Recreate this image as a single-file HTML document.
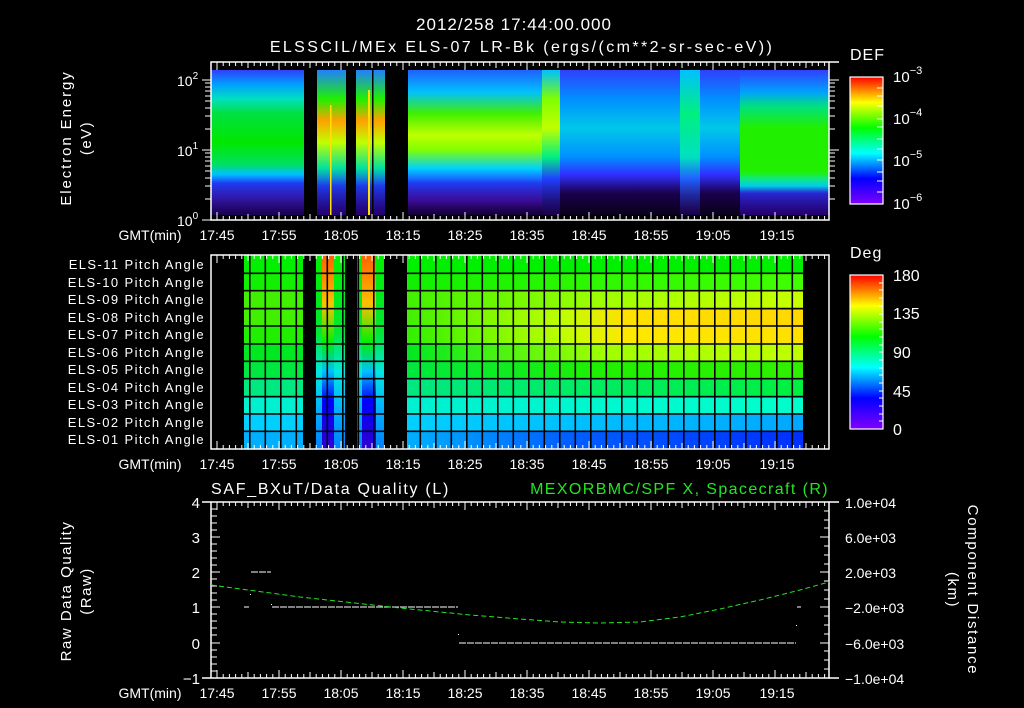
<!DOCTYPE html>
<html><head><meta charset="utf-8"><style>
html,body{margin:0;padding:0;background:#000;}
svg{display:block}
text{font-family:"Liberation Sans",sans-serif;fill:#fff;}
</style></head><body>
<svg width="1024" height="708" viewBox="0 0 1024 708" xmlns="http://www.w3.org/2000/svg">
<defs>
<linearGradient id="gA" x1="0" y1="0" x2="0" y2="1">
<stop offset="0" stop-color="#3040ff"/><stop offset=".1" stop-color="#00a0ff"/><stop offset=".2" stop-color="#00e0c0"/><stop offset=".3" stop-color="#00e040"/><stop offset=".5" stop-color="#00e800"/><stop offset=".65" stop-color="#00e060"/><stop offset=".72" stop-color="#00c0ff"/><stop offset=".78" stop-color="#2040ff"/><stop offset=".88" stop-color="#4020e0"/><stop offset="1" stop-color="#300090"/></linearGradient>
<linearGradient id="gB" x1="0" y1="0" x2="0" y2="1">
<stop offset="0" stop-color="#2080ff"/><stop offset=".2" stop-color="#20f000"/><stop offset=".35" stop-color="#ffa000"/><stop offset=".5" stop-color="#c0ff00"/><stop offset=".68" stop-color="#00e0a0"/><stop offset=".8" stop-color="#2040ff"/><stop offset="1" stop-color="#4000c0"/></linearGradient>
<linearGradient id="gD" x1="0" y1="0" x2="0" y2="1">
<stop offset="0" stop-color="#2060ff"/><stop offset=".15" stop-color="#00c0ff"/><stop offset=".3" stop-color="#40f000"/><stop offset=".45" stop-color="#c0ff00"/><stop offset=".55" stop-color="#80ff00"/><stop offset=".68" stop-color="#00d0ff"/><stop offset=".78" stop-color="#2040ff"/><stop offset=".9" stop-color="#5010d0"/><stop offset="1" stop-color="#200060"/></linearGradient>
<linearGradient id="gE" x1="0" y1="0" x2="0" y2="1">
<stop offset="0" stop-color="#00c0ff"/><stop offset=".2" stop-color="#80ff00"/><stop offset=".4" stop-color="#c0ff00"/><stop offset=".6" stop-color="#00f080"/><stop offset=".75" stop-color="#2040ff"/><stop offset="1" stop-color="#300080"/></linearGradient>
<linearGradient id="gF" x1="0" y1="0" x2="0" y2="1">
<stop offset="0" stop-color="#3040ff"/><stop offset=".2" stop-color="#0090ff"/><stop offset=".4" stop-color="#00c8e8"/><stop offset=".6" stop-color="#0090ff"/><stop offset=".72" stop-color="#3030ff"/><stop offset=".85" stop-color="#200060"/><stop offset="1" stop-color="#100030"/></linearGradient>
<linearGradient id="gG" x1="0" y1="0" x2="0" y2="1">
<stop offset="0" stop-color="#00c0ff"/><stop offset=".3" stop-color="#00f080"/><stop offset=".6" stop-color="#00e0c0"/><stop offset=".75" stop-color="#2060ff"/><stop offset="1" stop-color="#300080"/></linearGradient>
<linearGradient id="gI" x1="0" y1="0" x2="0" y2="1">
<stop offset="0" stop-color="#3040ff"/><stop offset=".15" stop-color="#00a0ff"/><stop offset=".25" stop-color="#00e080"/><stop offset=".4" stop-color="#20f000"/><stop offset=".7" stop-color="#20f000"/><stop offset=".8" stop-color="#00e0ff"/><stop offset=".85" stop-color="#3030ff"/><stop offset="1" stop-color="#4000c0"/></linearGradient>
<linearGradient id="dk" x1="0" y1="0" x2="0" y2="1">
<stop offset="0" stop-color="#000" stop-opacity="0"/><stop offset=".75" stop-color="#000" stop-opacity="0"/><stop offset="1" stop-color="#000" stop-opacity=".45"/></linearGradient>
<linearGradient id="cbDEF" x1="0" y1="1" x2="0" y2="0">
<stop offset="0" stop-color="#8000ff"/><stop offset=".2" stop-color="#0000ff"/><stop offset=".4" stop-color="#00ffff"/><stop offset=".6" stop-color="#00ff00"/><stop offset=".8" stop-color="#ffff00"/><stop offset="1" stop-color="#ff0000"/></linearGradient>
<linearGradient id="sB" x1="0" y1="0" x2="0" y2="1">
<stop offset="0" stop-color="#ff6000"/><stop offset=".25" stop-color="#ffc000"/><stop offset=".45" stop-color="#00f000"/><stop offset=".6" stop-color="#00c0ff"/><stop offset=".75" stop-color="#0000ff"/><stop offset="1" stop-color="#3000d0"/></linearGradient>
<linearGradient id="sG" x1="0" y1="0" x2="0" y2="1">
<stop offset="0" stop-color="#00f000"/><stop offset=".4" stop-color="#00e830"/><stop offset=".6" stop-color="#00e8e0"/><stop offset=".8" stop-color="#00b0ff"/><stop offset="1" stop-color="#0080ff"/></linearGradient>
<linearGradient id="r1" x1="0" x2="1"><stop offset="0" stop-color="#00f000"/><stop offset="1" stop-color="#00f000"/></linearGradient>
<linearGradient id="r2" x1="0" x2="1"><stop offset="0" stop-color="#10f000"/><stop offset=".5" stop-color="#30f800"/><stop offset="1" stop-color="#40ff00"/></linearGradient>
<linearGradient id="r3" x1="0" x2="1"><stop offset="0" stop-color="#40f000"/><stop offset=".5" stop-color="#a0ff00"/><stop offset="1" stop-color="#c8ff00"/></linearGradient>
<linearGradient id="r4" x1="0" x2="1"><stop offset="0" stop-color="#40f000"/><stop offset=".4" stop-color="#c0ff00"/><stop offset=".55" stop-color="#ffe000"/><stop offset="1" stop-color="#ffd800"/></linearGradient>
<linearGradient id="r5" x1="0" x2="1"><stop offset="0" stop-color="#30f000"/><stop offset=".4" stop-color="#c0ff00"/><stop offset=".55" stop-color="#ffe800"/><stop offset="1" stop-color="#ffe000"/></linearGradient>
<linearGradient id="r6" x1="0" x2="1"><stop offset="0" stop-color="#00e820"/><stop offset=".5" stop-color="#a0ff00"/><stop offset="1" stop-color="#c0ff00"/></linearGradient>
<linearGradient id="r7" x1="0" x2="1"><stop offset="0" stop-color="#00e840"/><stop offset=".5" stop-color="#20f000"/><stop offset="1" stop-color="#30f000"/></linearGradient>
<linearGradient id="r8" x1="0" x2="1"><stop offset="0" stop-color="#00e880"/><stop offset="1" stop-color="#00f040"/></linearGradient>
<linearGradient id="r9" x1="0" x2="1"><stop offset="0" stop-color="#00f0d0"/><stop offset="1" stop-color="#00ffcc"/></linearGradient>
<linearGradient id="r10" x1="0" x2="1"><stop offset="0" stop-color="#00d0ff"/><stop offset="1" stop-color="#00a8ff"/></linearGradient>
<linearGradient id="r11" x1="0" x2="1"><stop offset="0" stop-color="#00b0ff"/><stop offset=".4" stop-color="#0060ff"/><stop offset="1" stop-color="#0030ff"/></linearGradient>
<pattern id="vgrid" x="264.5" y="0" width="15.5" height="708" patternUnits="userSpaceOnUse"><rect x="0" y="0" width="1.6" height="708" fill="#000"/></pattern>
<path id="mt" stroke="#fff" stroke-width="1" d="M223.2 0v4M229.4 0v4M235.6 0v4M241.8 0v4M248 0v6M254.2 0v4M260.4 0v4M266.6 0v4M272.8 0v4M285.2 0v4M291.4 0v4M297.6 0v4M303.8 0v4M310 0v6M316.2 0v4M322.4 0v4M328.6 0v4M334.8 0v4M347.2 0v4M353.4 0v4M359.6 0v4M365.8 0v4M372 0v6M378.2 0v4M384.4 0v4M390.6 0v4M396.8 0v4M409.2 0v4M415.4 0v4M421.6 0v4M427.8 0v4M434 0v6M440.2 0v4M446.4 0v4M452.6 0v4M458.8 0v4M471.2 0v4M477.4 0v4M483.6 0v4M489.8 0v4M496 0v6M502.2 0v4M508.4 0v4M514.6 0v4M520.8 0v4M533.2 0v4M539.4 0v4M545.6 0v4M551.8 0v4M558 0v6M564.2 0v4M570.4 0v4M576.6 0v4M582.8 0v4M595.2 0v4M601.4 0v4M607.6 0v4M613.8 0v4M620 0v6M626.2 0v4M632.4 0v4M638.6 0v4M644.8 0v4M657.2 0v4M663.4 0v4M669.6 0v4M675.8 0v4M682 0v6M688.2 0v4M694.4 0v4M700.6 0v4M706.8 0v4M719.2 0v4M725.4 0v4M731.6 0v4M737.8 0v4M744 0v6M750.2 0v4M756.4 0v4M762.6 0v4M768.8 0v4M781.2 0v4M787.4 0v4M793.6 0v4M799.8 0v4M806 0v6M812.2 0v4M818.4 0v4M824.6 0v4M217 0v8M279 0v8M341 0v8M403 0v8M465 0v8M527 0v8M589 0v8M651 0v8M713 0v8M775 0v8"/>
</defs>

<!-- titles -->
<text x="514" y="30" font-size="17" text-anchor="middle" letter-spacing="1">2012/258 17:44:00.000</text>
<text x="522" y="52" font-size="16" text-anchor="middle" letter-spacing="2.4">ELSSCIL/MEx ELS-07 LR-Bk  (ergs/(cm**2-sr-sec-eV))</text>

<!-- ===== TOP PANEL ===== -->
<g>
<rect x="211" y="70" width="93" height="145" fill="url(#gA)"/>
<rect x="317" y="70" width="29" height="145" fill="url(#gB)"/>
<rect x="356" y="70" width="29" height="145" fill="url(#gB)"/>
<rect x="408" y="70" width="134" height="145" fill="url(#gD)"/>
<rect x="542" y="70" width="18" height="145" fill="url(#gE)"/>
<rect x="560" y="70" width="120" height="145" fill="url(#gF)"/>
<rect x="680" y="70" width="20" height="145" fill="url(#gG)"/>
<rect x="700" y="70" width="40" height="145" fill="url(#gF)"/>
<rect x="740" y="70" width="89" height="145" fill="url(#gI)"/>
<rect x="211" y="70" width="618" height="145" fill="url(#dk)"/>
<rect x="330" y="105" width="1.5" height="110" fill="#ffe000"/>
<rect x="372" y="70" width="1.5" height="145" fill="#000"/>
<rect x="368" y="90" width="2" height="125" fill="#ffe000"/>
</g>
<rect x="211" y="62" width="618" height="158" fill="none" stroke="#fff" stroke-width="1.5"/>
<line x1="829" y1="62" x2="839" y2="62" stroke="#fff" stroke-width="1.5"/>
<use href="#mt" transform="translate(0,62)"/>
<use href="#mt" transform="translate(0,220) scale(1,-1)"/>
<path stroke="#fff" stroke-width="1" d="M202 80h9M202 150h9M202 220h9M205 199h6M205 186h6M205 178h6M205 171h6M205 166h6M205 161h6M205 157h6M205 153h6M205 129h6M205 116h6M205 108h6M205 101h6M205 96h6M205 91h6M205 87h6M205 83h6M829 80h10M829 150h10M829 199h6M829 186h6M829 178h6M829 171h6M829 166h6M829 161h6M829 157h6M829 153h6M829 129h6M829 116h6M829 108h6M829 101h6M829 96h6M829 91h6M829 87h6M829 83h6"/>
<text x="177" y="86" font-size="14">10<tspan font-size="10" dy="-7">2</tspan></text>
<text x="177" y="156" font-size="14">10<tspan font-size="10" dy="-7">1</tspan></text>
<text x="177" y="226" font-size="14">10<tspan font-size="10" dy="-7">0</tspan></text>
<text transform="translate(71,138) rotate(-90)" font-size="15" text-anchor="middle" letter-spacing="1.9">Electron Energy</text>
<text transform="translate(91,138) rotate(-90)" font-size="15" text-anchor="middle" letter-spacing="1.5">(eV)</text>

<g font-size="14" text-anchor="middle">
<text x="150" y="240">GMT(min)</text>
<text x="217" y="240">17:45</text><text x="279" y="240">17:55</text><text x="341" y="240">18:05</text><text x="403" y="240">18:15</text><text x="465" y="240">18:25</text><text x="527" y="240">18:35</text><text x="589" y="240">18:45</text><text x="651" y="240">18:55</text><text x="713" y="240">19:05</text><text x="777" y="240">19:15</text>
</g>

<!-- DEF colorbar -->
<text x="850" y="60" font-size="16" letter-spacing="1">DEF</text>
<rect x="850" y="77" width="33" height="127" fill="url(#cbDEF)" stroke="#fff" stroke-width="1.2"/>
<path stroke="#fff" stroke-width="1" d="M877 88h6M877 96h6M877 106h6M877 119h6M877 127h6M877 139h6M877 149h6M877 160h6M877 172h6M877 181h6M877 192h6"/>
<g font-size="15">
<text x="893" y="82">10<tspan font-size="11" dy="-8">−3</tspan></text>
<text x="893" y="124">10<tspan font-size="11" dy="-8">−4</tspan></text>
<text x="893" y="166">10<tspan font-size="11" dy="-8">−5</tspan></text>
<text x="893" y="209">10<tspan font-size="11" dy="-8">−6</tspan></text>
</g>

<!-- ===== MIDDLE PANEL ===== -->
<g>
<rect x="244" y="255" width="59" height="17.6" fill="#00f000"/>
<rect x="244" y="272.6" width="59" height="17.6" fill="#10f000"/>
<rect x="244" y="290.2" width="59" height="17.6" fill="#40f000"/>
<rect x="244" y="307.8" width="59" height="17.6" fill="#40f000"/>
<rect x="244" y="325.4" width="59" height="17.6" fill="#20f000"/>
<rect x="244" y="343" width="59" height="17.6" fill="#00e820"/>
<rect x="244" y="360.6" width="59" height="17.6" fill="#00e840"/>
<rect x="244" y="378.2" width="59" height="17.6" fill="#00e880"/>
<rect x="244" y="395.8" width="59" height="17.6" fill="#00f0d0"/>
<rect x="244" y="413.4" width="59" height="17.6" fill="#00d0ff"/>
<rect x="244" y="431" width="59" height="18" fill="#00b0ff"/>
<rect x="316" y="255" width="29" height="194" fill="url(#sG)"/>
<rect x="322" y="255" width="12" height="194" fill="url(#sB)"/>
<rect x="357" y="255" width="27" height="194" fill="url(#sG)"/>
<rect x="362" y="255" width="14" height="194" fill="url(#sB)"/>
<rect x="407" y="255" width="396" height="17.6" fill="url(#r1)"/>
<rect x="407" y="272.6" width="396" height="17.6" fill="url(#r2)"/>
<rect x="407" y="290.2" width="396" height="17.6" fill="url(#r3)"/>
<rect x="407" y="307.8" width="396" height="17.6" fill="url(#r4)"/>
<rect x="407" y="325.4" width="396" height="17.6" fill="url(#r5)"/>
<rect x="407" y="343" width="396" height="17.6" fill="url(#r6)"/>
<rect x="407" y="360.6" width="396" height="17.6" fill="url(#r7)"/>
<rect x="407" y="378.2" width="396" height="17.6" fill="url(#r8)"/>
<rect x="407" y="395.8" width="396" height="17.6" fill="url(#r9)"/>
<rect x="407" y="413.4" width="396" height="17.6" fill="url(#r10)"/>
<rect x="407" y="431" width="396" height="18" fill="url(#r11)"/>
<rect x="211" y="255" width="618" height="194" fill="url(#vgrid)"/>
<path stroke="#000" stroke-width="1.6" d="M211 273.3H829M211 290.7H829M211 308.7H829M211 326H829M211 344H829M211 361.3H829M211 378.7H829M211 396.7H829M211 414H829M211 431.3H829"/>
<rect x="211" y="255" width="33" height="194" fill="#000"/>
<rect x="303" y="255" width="13" height="194" fill="#000"/>
<rect x="345" y="255" width="12" height="194" fill="#000"/>
<rect x="384" y="255" width="23" height="194" fill="#000"/>
<rect x="803" y="255" width="26" height="194" fill="#000"/>
</g>
<rect x="211" y="255" width="618" height="194" fill="none" stroke="#fff" stroke-width="1.5"/>
<use href="#mt" transform="translate(0,255)"/>
<use href="#mt" transform="translate(0,449) scale(1,-1)"/>
<g font-size="13" text-anchor="end" letter-spacing="1.4">
<text x="205" y="269">ELS-11 Pitch Angle</text>
<text x="205" y="287">ELS-10 Pitch Angle</text>
<text x="205" y="304">ELS-09 Pitch Angle</text>
<text x="205" y="322">ELS-08 Pitch Angle</text>
<text x="205" y="339">ELS-07 Pitch Angle</text>
<text x="205" y="357">ELS-06 Pitch Angle</text>
<text x="205" y="374">ELS-05 Pitch Angle</text>
<text x="205" y="392">ELS-04 Pitch Angle</text>
<text x="205" y="409">ELS-03 Pitch Angle</text>
<text x="205" y="427">ELS-02 Pitch Angle</text>
<text x="205" y="444">ELS-01 Pitch Angle</text>
</g>
<g font-size="14" text-anchor="middle">
<text x="150" y="469">GMT(min)</text>
<text x="217" y="469">17:45</text><text x="279" y="469">17:55</text><text x="341" y="469">18:05</text><text x="403" y="469">18:15</text><text x="465" y="469">18:25</text><text x="527" y="469">18:35</text><text x="589" y="469">18:45</text><text x="651" y="469">18:55</text><text x="713" y="469">19:05</text><text x="777" y="469">19:15</text>
</g>
<text x="850" y="258" font-size="16" letter-spacing="1">Deg</text>
<rect x="850" y="275" width="33" height="154" fill="url(#cbDEF)" stroke="#fff" stroke-width="1.2"/>
<path stroke="#fff" stroke-width="1" d="M879 283h4M879 290h4M879 298h4M879 306h4M879 314h4M879 322h4M879 329h4M879 337h4M879 345h4M879 352h4M879 360h4M879 368h4M879 375h4M879 383h4M879 391h4M879 398h4M879 406h4M879 414h4M879 421h4"/>
<g font-size="16">
<text x="893" y="281">180</text><text x="893" y="319">135</text><text x="893" y="358">90</text><text x="893" y="397">45</text><text x="893" y="435">0</text>
</g>

<!-- ===== BOTTOM PANEL ===== -->
<text x="211" y="494" font-size="16" letter-spacing="1.7">SAF_BXuT/Data Quality (L)</text>
<text x="829" y="494" font-size="16" text-anchor="end" letter-spacing="1.4" style="fill:#22e622">MEXORBMC/SPF X, Spacecraft (R)</text>
<rect x="211" y="502" width="618" height="176" fill="none" stroke="#fff" stroke-width="1.5"/>
<line x1="202" y1="502" x2="211" y2="502" stroke="#fff" stroke-width="1.5"/>
<line x1="202" y1="678" x2="211" y2="678" stroke="#fff" stroke-width="1.5"/>
<line x1="829" y1="502" x2="839" y2="502" stroke="#fff" stroke-width="1.5"/>
<line x1="829" y1="678" x2="839" y2="678" stroke="#fff" stroke-width="1.5"/>
<use href="#mt" transform="translate(0,502)"/>
<use href="#mt" transform="translate(0,678) scale(1,-1)"/>
<path stroke="#fff" stroke-width="1" d="M211 537h9M211 572h9M211 607h9M211 643h9M211 509h6M211 516h6M211 523h6M211 530h6M211 544h6M211 551h6M211 558h6M211 565h6M211 579h6M211 586h6M211 593h6M211 600h6M211 614h6M211 621h6M211 628h6M211 635h6M211 650h6M211 657h6M211 664h6M211 671h6"/>
<path stroke="#fff" stroke-width="1" d="M829 537h-9M829 572h-9M829 607h-9M829 643h-9M829 511h-5M829 520h-5M829 528h-5M829 546h-5M829 555h-5M829 564h-5M829 581h-5M829 590h-5M829 599h-5M829 616h-5M829 625h-5M829 634h-5M829 651h-5M829 660h-5M829 669h-5"/>
<g font-size="15" text-anchor="end">
<text x="200" y="508">4</text><text x="200" y="543">3</text><text x="200" y="578">2</text><text x="200" y="613">1</text><text x="200" y="649">0</text><text x="200" y="684">−1</text>
</g>
<g font-size="14">
<text x="845" y="508">1.0e+04</text><text x="845" y="543">6.0e+03</text><text x="845" y="578">2.0e+03</text><text x="845" y="613">−2.0e+03</text><text x="845" y="649">−6.0e+03</text><text x="845" y="684">−1.0e+04</text>
</g>
<text transform="translate(71,591) rotate(-90)" font-size="15" text-anchor="middle" letter-spacing="1.5">Raw Data Quality</text>
<text transform="translate(91,591) rotate(-90)" font-size="15" text-anchor="middle" letter-spacing="1.5">(Raw)</text>
<text transform="translate(968,590) rotate(90)" font-size="15" text-anchor="middle" letter-spacing="1.7">Component Distance</text>
<text transform="translate(948,590) rotate(90)" font-size="15" text-anchor="middle" letter-spacing="1.5">(km)</text>
<!-- data -->
<path stroke="#fff" stroke-width="1" stroke-dasharray="7,1" fill="none" d="M251 572H271M272 607H458M459 643H796M244 607H249M797 607H801"/>
<rect x="250" y="594" width="1" height="1" fill="#fff"/><rect x="271" y="604" width="1" height="1" fill="#fff"/><rect x="458" y="634" width="1" height="1" fill="#fff"/><rect x="796" y="625" width="1" height="1" fill="#fff"/>
<path stroke="#22e622" stroke-width="1" stroke-dasharray="5,3" fill="none" d="M211 585 L300 597 L400 608 L470 615 L520 619 L560 622 L600 623 L640 622 L680 617 L720 609 L760 600 L800 590 L829 582"/>
<g font-size="14" text-anchor="middle">
<text x="150" y="698">GMT(min)</text>
<text x="217" y="698">17:45</text><text x="279" y="698">17:55</text><text x="341" y="698">18:05</text><text x="403" y="698">18:15</text><text x="465" y="698">18:25</text><text x="527" y="698">18:35</text><text x="589" y="698">18:45</text><text x="651" y="698">18:55</text><text x="713" y="698">19:05</text><text x="777" y="698">19:15</text>
</g>
</svg>
</body></html>
